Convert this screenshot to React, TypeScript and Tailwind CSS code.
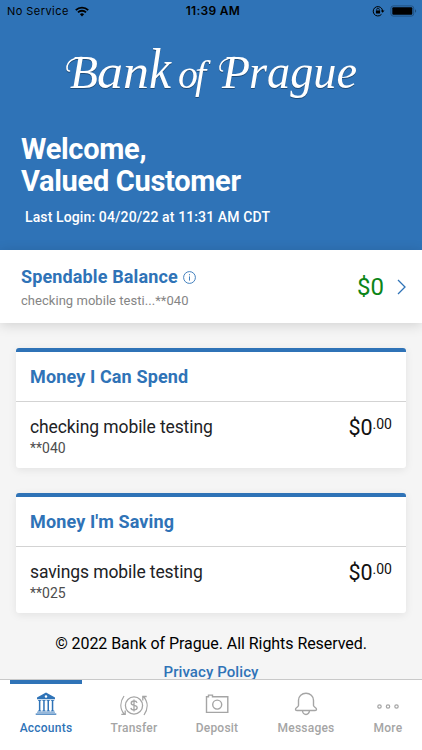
import React from "react";

function StatusBar() {
  return (
    <div className="grid h-[22px] grid-cols-3 items-center px-[6px] font-['Inter',sans-serif] text-black">
      <div className="flex items-center gap-[6px] pl-[1px]">
        <span className="whitespace-nowrap text-[11px] leading-[22px] tracking-[0.45px]">No Service</span>
        <svg width="14" height="11" viewBox="0 0 14 11" fill="none" stroke="black" strokeWidth="1.9">
          <path d="M.8 4.1a9 9 0 0 1 12.4 0M3 6.4a5.8 5.8 0 0 1 8 0" />
          <path d="M4.9 8.2a3 3 0 0 1 4.2 0L7 10.5Z" fill="black" stroke="none" />
        </svg>
      </div>
      <span className="pl-[4px] text-center text-[12px] font-semibold tracking-[0.3px]">11:39 AM</span>
      <div className="-mr-[1px] flex items-center justify-end gap-[6px]">
        <svg className="-mr-[1px]" width="13" height="12" viewBox="0 0 13 12" fill="none" stroke="black">
          <path d="M9.500 9.300A4.700 4.700 0 1 1 10.600 6" />
          <path d="M8.700 5.400h3.800l-1.900 2.300Z" fill="black" stroke="none" />
          <rect x="3.900" y="5.400" width="4.200" height="3.100" rx=".4" fill="black" stroke="none" />
          <path d="M4.700 5.600V4.500a1.300 1.300 0 0 1 2.600 0v1.100" strokeWidth=".8" />
        </svg>
        <svg width="27" height="12" viewBox="0 0 27 12">
          <rect x=".9" y=".9" width="22.8" height="10.2" rx="2.4" fill="none" stroke="#1f4d7a" strokeWidth=".9" />
          <rect x="2.3" y="2.3" width="20" height="7.4" rx="1" fill="black" />
          <path d="M25 4.2c1.5.6 1.5 3 0 3.6Z" fill="#1f4d7a" />
        </svg>
      </div>
    </div>
  );
}

function Logo() {
  return (
    <svg
      className="block h-[78px] w-full font-['Liberation_Serif',serif] italic [filter:drop-shadow(0.5px_1px_0.5px_rgba(0,0,0,0.35))]"
      viewBox="0 0 422 78"
      fill="white"
    >
      <text x="70" y="63" fontSize="47" textLength="28" lengthAdjust="spacingAndGlyphs">B</text>
      <text x="97" y="63" fontSize="48" textLength="52" lengthAdjust="spacingAndGlyphs">an</text>
      <text x="149" y="63" fontSize="57" textLength="22" lengthAdjust="spacingAndGlyphs">k</text>
      <text x="178" y="63" fontSize="40" textLength="28" lengthAdjust="spacing">of</text>
      <text x="222" y="63" fontSize="47" textLength="28" lengthAdjust="spacingAndGlyphs">P</text>
      <text x="249" y="63" fontSize="48" textLength="108" lengthAdjust="spacingAndGlyphs">rague</text>
      <path d="M82 32.500c-8-.5-15 4-15 10.500 0 2 1 3 2.500 3M235 32.500c-8-.5-15 4-15 10.500 0 2 1 3 2.500 3" fill="none" stroke="white" strokeWidth="1.600" strokeLinecap="round" />
    </svg>
  );
}

function AccountCard({ title, name, mask }: { title: string; name: string; mask: string }) {
  return (
    <section className="h-[120px] rounded-[3px] border-t-4 border-[#2f73b7] bg-white shadow-[0_2px_9px_rgba(0,0,0,0.08)]">
      <h2 className="h-[50px] border-b border-[#d3d3d3] pl-[14px] text-[18px] font-bold leading-[49px] tracking-[0.13px] text-[#2f73b7]">
        {title}
      </h2>
      <div className="flex justify-between pl-[14px] pr-[14px] pt-[14px]">
        <div>
          <p className="text-[17.500px] leading-[22px] tracking-[-0.1px] text-[#212225]">{name}</p>
          <p className="text-[14px] leading-[20px] text-[#4d4d4d]">{mask}</p>
        </div>
        <div className="flex items-start text-[#111]">
          <span className="text-[21.500px] leading-[23px]">$0</span>
          <span className="text-[14px] leading-[16px]">.00</span>
        </div>
      </div>
    </section>
  );
}

function BankIcon() {
  return (
    <svg width="22" height="24" viewBox="0 0 22 24" fill="#2f73b7">
      <path fillRule="evenodd" d="M11 .5 20 5.500v1.700H2V5.500ZM11 3.200a1.300 1.300 0 1 0 0 2.600 1.300 1.300 0 0 0 0-2.600Z" />
      <path d="M3 8h3.300v.8h-.9v9.700h.9v.8H3v-.8h.9V8.800H3ZM7.300 8h3.300v.8h-.9v9.700h.9v.8H7.300v-.8h.9V8.800h-.9ZM11.600 8h3.300v.8H14v9.700h.9v.8h-3.300v-.8h.9V8.800h-.9ZM15.900 8h3.300v.8h-.9v9.700h.9v.8h-3.300v-.8h.9V8.800h-.9ZM2 19.700h18v.9H2ZM.7 21.400h20.600v1.300H.7Z" />
    </svg>
  );
}

function TransferIcon() {
  return (
    <svg width="28" height="24" viewBox="0 0 28 24" fill="none" stroke="#a5a5a5" strokeWidth="1.300">
      <circle cx="14" cy="13.500" r="8.600" />
      <path d="M17 10.900c-.3-1.200-1.300-1.900-2.900-1.900-1.700 0-2.900.8-2.900 2.200 0 3 6 1.300 6 4.400 0 1.500-1.200 2.400-3.100 2.400-1.800 0-3-.8-3.200-2.200M14 7.500v12" />
      <path d="M4 4C-.2 10-.2 17 4.500 22.500M1.300 22.300h3.900v-3.900M24 23c4.200-6 4.200-13-.5-18.500M26.700 4.500h-3.900v3.900" />
    </svg>
  );
}

function CameraIcon() {
  return (
    <svg width="24" height="24" viewBox="0 0 24 24" fill="none" stroke="#a5a5a5" strokeWidth="1.400">
      <path d="M1.500 4.800h2V3.100h4v1.700h15.300v15.600H1.500Z" />
      <circle cx="12.200" cy="12.600" r="4.500" />
    </svg>
  );
}

function BellIcon() {
  return (
    <svg width="24" height="24" viewBox="0 0 24 24" fill="none" stroke="#a5a5a5" strokeWidth="1.400">
      <path d="M4.500 13.500V8.200a7.500 7 0 0 1 15 0v5.300c0 1.500 3 2 3 3.800 0 .8-.6 1.200-1.400 1.200H2.900c-.8 0-1.400-.4-1.400-1.200 0-1.800 3-2.300 3-3.800ZM8.500 18.500a3.500 4 0 0 0 7 0" />
    </svg>
  );
}

function MoreIcon() {
  return (
    <svg width="24" height="24" viewBox="0 0 24 24" fill="none" stroke="#a5a5a5" strokeWidth="1.200">
      <circle cx="3.500" cy="14.500" r="1.700" />
      <circle cx="12" cy="14.500" r="1.700" />
      <circle cx="20.500" cy="14.500" r="1.700" />
    </svg>
  );
}

function Tab({ icon, label, width, active }: { icon: React.ReactNode; label: string; width: string; active?: boolean }) {
  return (
    <div
      className={`flex shrink-0 flex-col items-center border-t-4 text-[12px] font-medium leading-[16px] tracking-[0.23px] ${width} ${
        active ? "border-[#2f73b7] text-[#2f73b7]" : "border-transparent text-[#a5a5a5]"
      }`}
    >
      <div className="mt-[8px] mb-[4px] h-[24px]">{icon}</div>
      {label}
    </div>
  );
}

export default function App() {
  return (
    <div className="flex h-[750px] w-[422px] flex-col overflow-hidden bg-[#f5f5f5] font-['Roboto',sans-serif]">
      <header className="h-[250px] shrink-0 bg-[#2f73b7] text-white">
        <StatusBar />
        <div className="pt-[3px]">
          <Logo />
        </div>
        <h1 className="pl-[21px] pt-[30px] text-[29px] font-bold leading-[32px] tracking-[-0.3px]">
          Welcome,
          <br />
          Valued Customer
        </h1>
        <p className="pl-[25px] pt-[10px] text-[14px] font-medium leading-[20px] tracking-[0.12px]">
          Last Login: 04/20/22 at 11:31 AM CDT
        </p>
      </header>

      <section className="flex h-[73px] shrink-0 justify-between bg-white pl-[21px] pr-[16px] shadow-[0_2px_12px_rgba(0,0,0,0.15)]">
        <div className="pt-[15px]">
          <div className="flex items-center gap-[5px]">
            <h2 className="text-[18px] font-bold leading-[24px] tracking-[0.13px] text-[#2f73b7]">Spendable Balance</h2>
            <svg width="13" height="13" viewBox="0 0 13 13" fill="none" stroke="#2f73b7" strokeWidth=".9">
              <circle cx="6.500" cy="6.500" r="5.900" />
              <path d="M6.500 5.400v4.200M6.500 3.200v1.100" />
            </svg>
          </div>
          <p className="text-[13px] leading-[23px] tracking-[0.04px] text-[#858585]">checking mobile testi...**040</p>
        </div>
        <div className="flex items-center gap-[13px]">
          <span className="text-[24px] text-[#0c8517]">$0</span>
          <svg width="9" height="16" viewBox="0 0 9 16" fill="none" stroke="#2f73b7" strokeWidth="1.300">
            <path d="m1 1 7 7-7 7" />
          </svg>
        </div>
      </section>

      <main className="flex shrink-0 flex-col gap-[25px] px-4 pt-[25px]">
        <AccountCard title="Money I Can Spend" name="checking mobile testing" mask="**040" />
        <AccountCard title="Money I'm Saving" name="savings mobile testing" mask="**025" />
      </main>

      <footer className="h-[66px] shrink-0 pt-[17px] text-center leading-[28px]">
        <p className="text-[16px] tracking-[-0.06px] text-black">© 2022 Bank of Prague. All Rights Reserved.</p>
        <p className="text-[15px] font-medium tracking-[0.08px] text-[#2f73b7]">Privacy Policy</p>
      </footer>

      <nav className="flex h-[71px] shrink-0 border-t border-[#c9c9c9] bg-white pl-[10px]">
        <Tab icon={<BankIcon />} label="Accounts" width="w-[72px]" active />
        <Tab icon={<TransferIcon />} label="Transfer" width="w-[104px]" />
        <Tab icon={<CameraIcon />} label="Deposit" width="w-[62px]" />
        <Tab icon={<BellIcon />} label="Messages" width="w-[116px]" />
        <Tab icon={<MoreIcon />} label="More" width="w-[48px]" />
      </nav>
    </div>
  );
}
